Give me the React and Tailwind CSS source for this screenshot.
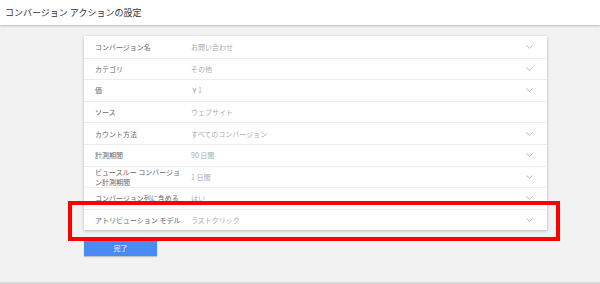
import React from "react";

const ROWS = [
  { label: "コンバージョン名", value: "お問い合わせ", chevron: true },
  { label: "カテゴリ", value: "その他", chevron: true },
  { label: "価", value: "￥1", chevron: true },
  { label: "ソース", value: "ウェブサイト", chevron: false },
  { label: "カウント方法", value: "すべてのコンバージョン", chevron: true },
  { label: "計測期間", value: "90 日間", chevron: true },
  { label: "ビュースルー コンバージョン計測期間", value: "1 日間", chevron: true },
  { label: "コンバージョン列に含める", value: "はい", chevron: true },
  { label: "アトリビューション モデル", value: "ラストクリック", chevron: true },
];

const Chevron = () => (
  <svg width="7" height="4" viewBox="0 0 7 4" className="shrink-0">
    <path d="M0.5 0.5 L3.5 3.3 L6.5 0.5" fill="none" stroke="#b5b5b5" strokeWidth="1" />
  </svg>
);

const App = () => {
  return (
    <div
      className="relative w-[600px] h-[284px] bg-[#f2f2f2] flex flex-col border-b-[2px] border-[#d9d9d9] overflow-hidden"
      style={{ fontFamily: '"Noto Sans CJK JP", "Noto Sans", sans-serif' }}
    >
      {/* Header */}
      <div className="h-[25px] shrink-0 bg-white shadow-[0_1px_2px_rgba(0,0,0,0.25)] flex items-center px-[5px] text-[9px] text-[#333]">
        コンバージョン アクションの設定
      </div>

      <div className="pl-[84px] pt-[11px]">
        {/* Settings card */}
        <div className="w-[463px] bg-white shadow-[0_1px_3px_rgba(0,0,0,0.25)]">
          {ROWS.map((row, i) => (
            <div
              key={row.label}
              className={`h-[21.6px] flex items-center pl-[11px] pr-[14px] ${i > 0 ? "border-t border-[#ececec]" : ""}`}
            >
              <div className="w-[96px] pr-[8px] text-[7px] leading-[10px] text-[#666]">
                {row.label}
              </div>
              <div className="flex-1 text-[7px] leading-[10px] text-[#aaa]">{row.value}</div>
              {row.chevron && <Chevron />}
            </div>
          ))}
        </div>

        {/* Done button */}
        <button className="mt-[10px] w-[73px] h-[16px] bg-[#4a8af4] text-white text-[7px] flex items-center justify-center shadow-[0_1px_1px_rgba(0,0,0,0.2)]">
          完了
        </button>
      </div>

      {/* Highlight box */}
      <div className="absolute left-[68px] top-[201px] w-[492px] h-[40px] border-[4px] border-[#ff0000]" />
    </div>
  );
};

export default App;
